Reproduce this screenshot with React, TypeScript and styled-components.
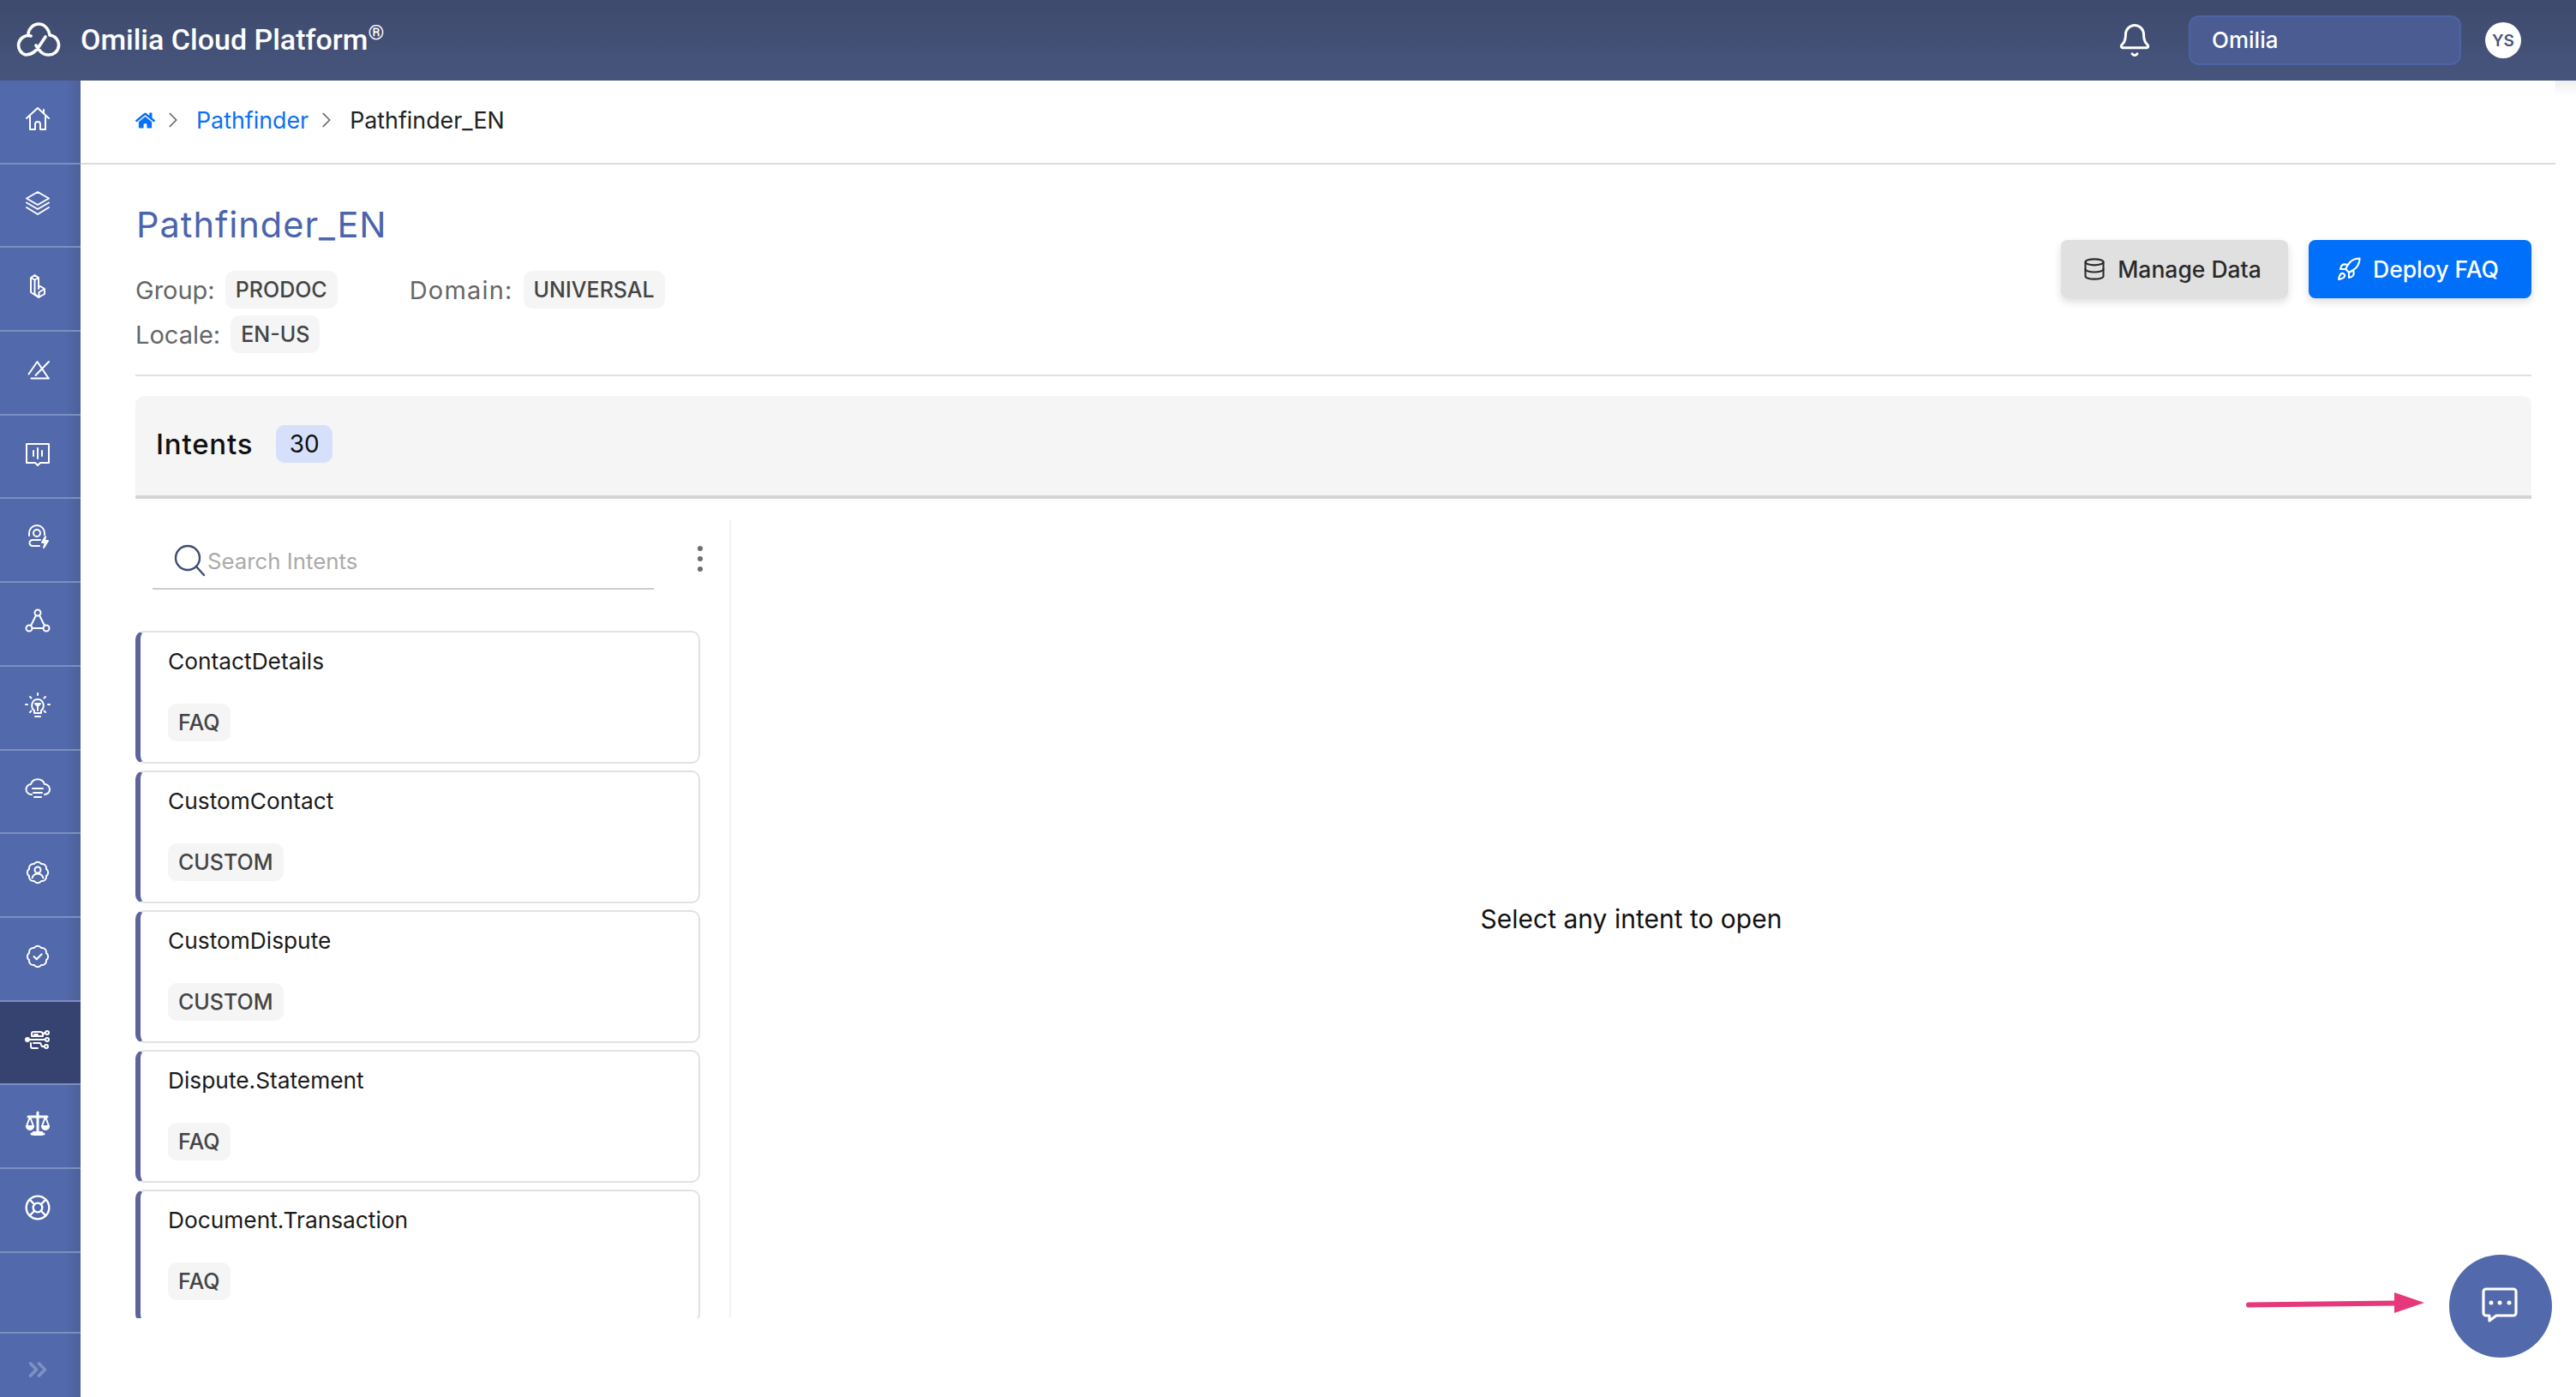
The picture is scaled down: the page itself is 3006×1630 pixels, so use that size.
import React from "react";
import styled, { createGlobalStyle } from "styled-components";
import { Bell, ChevronRight, ChevronsRight, Database, LifeBuoy, Rocket } from "lucide-react";
import { FaHome } from "react-icons/fa";

const GlobalStyle = createGlobalStyle`
  html, body {
    margin: 0;
    padding: 0;
    background: #fff;
  }
  body {
    width: 3006px;
    height: 1630px;
    overflow: hidden;
    font-family: Inter, "Liberation Sans", sans-serif;
  }
  * {
    box-sizing: border-box;
  }
`;

const Page = styled.div`
  position: relative;
  display: flex;
  flex-direction: column;
  width: 3006px;
  height: 1630px;
`;

const TopBar = styled.header`
  display: flex;
  align-items: center;
  flex: 0 0 94px;
  padding: 0 64px 0 18px;
  background: linear-gradient(to bottom, #3e4a6c, #47557e);
  color: #fff;
`;

const Brand = styled.div`
  display: flex;
  align-items: center;
  flex: 1;
  gap: 20px;
  margin-top: -2px;
`;

const BrandName = styled.span`
  font-family: Roboto, sans-serif;
  font-size: 34px;
  font-weight: 500;
  sup {
    font-size: 24px;
    font-weight: 400;
    line-height: 0;
    vertical-align: 12px;
  }
`;

const BellWrap = styled.div`
  display: flex;
  margin-right: 42px;
`;

const OrgSelect = styled.div`
  display: flex;
  align-items: center;
  width: 318px;
  height: 58px;
  padding: 0 0 2px 25px;
  margin-right: 28px;
  border: 2px solid #4e63a6;
  border-radius: 12px;
  background: #4b5c92;
  font-size: 26px;
  font-weight: 500;
`;

const Avatar = styled.div`
  display: flex;
  align-items: center;
  justify-content: center;
  width: 42px;
  height: 42px;
  border-radius: 50%;
  background: #fff;
  color: #47557e;
  font-size: 19px;
  font-weight: 600;
`;

const Body = styled.div`
  display: flex;
  flex: 1;
  min-height: 0;
`;

const Sidebar = styled.nav`
  display: flex;
  flex-direction: column;
  flex: 0 0 94px;
  background: linear-gradient(to right, #5269ab 0, #5269ab 82%, #4d6098 100%);
`;

const NavItem = styled.div<{ $active?: boolean; $size?: number }>`
  display: flex;
  align-items: center;
  justify-content: center;
  flex: 0 0 ${(p) => p.$size ?? 97.7}px;
  padding: 0 6px 6px 0;
  border-bottom: 2px solid #7c8fc2;
  background: ${(p) => (p.$active ? "#36426f" : "transparent")};
  color: #fff;
  svg {
    display: block;
  }
`;

const NavFooter = styled.div`
  display: flex;
  align-items: center;
  justify-content: center;
  flex: 1;
  padding: 11px 6px 0 0;
  color: #7d90c6;
`;

const Main = styled.main`
  display: flex;
  flex-direction: column;
  flex: 1;
  min-width: 0;
`;

const Gutter = styled.div`
  flex: 0 0 24px;
  background: linear-gradient(to bottom, #efefef, #fff 18px);
`;

const Breadcrumb = styled.div`
  display: flex;
  align-items: center;
  flex: 0 0 98px;
  gap: 12px;
  padding: 0 0 4px 64px;
  border-bottom: 2px solid #dcdcdc;
  font-size: 26.800px;
  color: #212121;
  svg {
    display: block;
  }
`;

const CrumbLink = styled.span`
  color: #0a70f5;
`;

const CrumbHome = styled.span`
  display: flex;
  color: #0a70f5;
`;

const CrumbArrow = styled.span`
  display: flex;
  margin: 0 0 0 -6px;
  color: #666;
`;

const Content = styled.div`
  display: flex;
  flex-direction: column;
  flex: 1;
  min-height: 0;
  padding: 0 28px 0 64px;
`;

const Header = styled.section`
  display: flex;
  align-items: center;
  justify-content: space-between;
  flex: 0 0 247px;
  border-bottom: 2px solid #e0e0e0;
`;

const HeaderInfo = styled.div`
  display: flex;
  flex-direction: column;
  align-self: flex-start;
  gap: 8px;
  padding-top: 47px;
`;

const Title = styled.h1`
  margin: 0 0 23px 1px;
  font-size: 41.500px;
  line-height: 46px;
  letter-spacing: 1px;
  font-weight: 400;
  color: #4a64ad;
`;

const MetaRow = styled.div`
  display: flex;
  align-items: center;
  gap: 84px;
`;

const Meta = styled.div`
  display: flex;
  align-items: center;
  gap: 12px;
`;

const MetaLabel = styled.span<{ $tracking?: number }>`
  font-size: 29px;
  letter-spacing: ${(p) => p.$tracking ?? 0}px;
  color: #666;
`;

const Chip = styled.span`
  display: inline-flex;
  align-items: center;
  height: 44px;
  padding: 0 12px;
  border-radius: 10px;
  background: #f5f5f5;
  color: #444;
  font-size: 25px;
  font-weight: 500;
`;

const Actions = styled.div`
  display: flex;
  gap: 24px;
  margin-bottom: 1px;
`;

const ActionButton = styled.button<{ $primary?: boolean; $width: number }>`
  display: flex;
  align-items: center;
  justify-content: center;
  gap: 13px;
  width: ${(p) => p.$width}px;
  height: 68px;
  padding: 0 6px 0 0;
  border: 0;
  border-radius: 8px;
  background: ${(p) => (p.$primary ? "#0070fb" : "#e0e0e0")};
  box-shadow: 0 4px 10px rgba(0, 0, 0, 0.14);
  color: ${(p) => (p.$primary ? "#fff" : "#2a2a2a")};
  font-family: inherit;
  font-size: 26.500px;
  font-weight: 500;
`;

const IntentsBar = styled.div`
  display: flex;
  align-items: center;
  flex: 0 0 120px;
  gap: 27px;
  margin-top: 23px;
  padding: 0 24px 4px;
  border-bottom: 4px solid #d4d4d4;
  border-radius: 10px 10px 0 0;
  background: #f5f5f5;
`;

const IntentsTitle = styled.span`
  font-size: 33px;
  font-weight: 500;
  letter-spacing: 0.8px;
  color: #111;
`;

const CountBadge = styled.span`
  display: flex;
  align-items: center;
  justify-content: center;
  width: 66px;
  height: 44px;
  border-radius: 10px;
  background: #d6e0fb;
  font-size: 28px;
  color: #111;
`;

const Split = styled.div`
  display: flex;
  flex: 0 0 932px;
  margin-top: 24px;
  overflow: hidden;
`;

const ListColumn = styled.div`
  display: flex;
  flex-direction: column;
  flex: 0 0 695px;
  padding-right: 34px;
  border-right: 2px solid #f2f2f2;
`;

const SearchRow = styled.div`
  display: flex;
  align-items: flex-end;
  justify-content: space-between;
  flex: 0 0 82px;
  padding-left: 20px;
`;

const SearchField = styled.div`
  display: flex;
  align-items: center;
  gap: 2px;
  width: 585px;
  height: 82px;
  padding: 30px 0 14px 24px;
  border-bottom: 2px solid #ccc;
  font-size: 25.800px;
  color: #aaa;
`;

const Kebab = styled.div`
  display: flex;
  flex-direction: column;
  gap: 6px;
  margin: 0 -3px 21px 0;
  i {
    display: block;
    width: 6px;
    height: 6px;
    border-radius: 50%;
    background: #6d6d6d;
  }
`;

const CardList = styled.div`
  display: flex;
  flex-direction: column;
  flex: none;
  gap: 8px;
  margin-top: 48px;
`;

const Card = styled.article`
  display: flex;
  flex-direction: column;
  align-items: flex-start;
  flex: 0 0 155px;
  padding: 18px 0 0 32px;
  border: 2px solid #e2e2e2;
  border-left: 6px solid #5f639c;
  border-radius: 10px;
`;

const CardTitle = styled.span`
  margin-bottom: 33px;
  font-size: 26.300px;
  line-height: 32px;
  color: #1a1a1a;
`;

const EmptyPane = styled.div`
  display: flex;
  align-items: center;
  justify-content: center;
  flex: 1;
  font-size: 30px;
  color: #111;
`;

const ChatButton = styled.button`
  position: absolute;
  right: 28px;
  bottom: 46px;
  display: flex;
  align-items: center;
  justify-content: center;
  width: 120px;
  height: 120px;
  padding: 0;
  border: 0;
  border-radius: 50%;
  background: #5269ab;
`;

const PointerArrow = styled.svg`
  position: absolute;
  left: 2618px;
  top: 1504px;
`;

const intents = [
  { name: "ContactDetails", kind: "FAQ" },
  { name: "CustomContact", kind: "CUSTOM" },
  { name: "CustomDispute", kind: "CUSTOM" },
  { name: "Dispute.Statement", kind: "FAQ" },
  { name: "Document.Transaction", kind: "FAQ" },
];

const stroke = {
  fill: "none",
  stroke: "currentColor",
  strokeWidth: 2,
  strokeLinecap: "round" as const,
  strokeLinejoin: "round" as const,
};

const Glyph = ({ children }: { children: React.ReactNode }) => (
  <svg width="30" height="30" viewBox="0 0 30 30" {...stroke}>
    {children}
  </svg>
);

// eight-lobed gear outline used by the two settings entries
const gearPath = () => {
  const points = Array.from({ length: 8 }, (_, i) => {
    const a = (Math.PI / 4) * i + Math.PI / 8;
    return [15 + 10.8 * Math.cos(a), 15 + 10.8 * Math.sin(a)];
  });
  const arcs = points.map(([x, y]) => `A5 5 0 0 1 ${x.toFixed(2)} ${y.toFixed(2)}`);
  return `M${points[7][0].toFixed(2)} ${points[7][1].toFixed(2)}${arcs.join("")}Z`;
};

const navIcons = [
  <Glyph key="home">
    <path d="M2 14 15 2l13 12M22 4v4M6 12v15h6v-6a3 3 0 0 1 6 0v6h6V12" />
  </Glyph>,
  <Glyph key="layers">
    <path d="M15 2 28 9.5 15 17 2 9.5zM2 14.5 15 22l13-7.5M2 20l13 8 13-8" />
  </Glyph>,
  <Glyph key="block">
    <path d="M7 5 11.500 2 16 5v13M7 5l4.500 2.500L16 5M11.500 7.500V24M7 5v17l9 6 7-4v-6l-5-3-2 1M11.500 24l5 4v-6l6.500-4" />
  </Glyph>,
  <Glyph key="mute">
    <path d="M4.500 19.500 14.500 5 27 23.500M28 5 12.500 21M7.500 24.500H28" />
  </Glyph>,
  <Glyph key="insight">
    <path d="M2 3h26v22H18l-3 3-3-3H2zM10 11v6M15 8v12M20 11v6" />
  </Glyph>,
  <Glyph key="agent">
    <circle cx="14" cy="10" r="4" />
    <path d="M5 13V10a9 9 0 0 1 18 0v2M18 18H9a3.500 3.500 0 0 0 0 7h8M24 14l-4 7h4l-2 6 5-8h-4z" />
  </Glyph>,
  <Glyph key="network">
    <circle cx="15" cy="5" r="3.500" />
    <circle cx="5" cy="23" r="3.500" />
    <circle cx="25" cy="23" r="3.500" />
    <path d="M13 8 7 20M17 8l6 12M8.500 23h13" />
  </Glyph>,
  <Glyph key="bulb">
    <path d="M15 1v2M3 14H1M29 14h-2M6 5l1.500 1.500M24 5l-1.500 1.500M6 23l1.500-1.500M24 23l-1.500-1.500M11 24v-3c-5-4-3-13 4-13s9 9 4 13v3zM12 28h6M12 13h6l-3 3zM15 16v5" />
  </Glyph>,
  <Glyph key="cloud">
    <path d="M8 22a6 6 0 0 1-1-12 8.500 8.500 0 0 1 16 0 6 6 0 0 1 0 12M9 15h12M10 20h10M11 25h8" />
  </Glyph>,
  <Glyph key="person">
    <path d={gearPath()} />
    <circle cx="15" cy="12" r="3.500" />
    <path d="M8.500 21.500c1-3.500 3.500-5 6.500-5s5.500 1.500 6.500 5" />
  </Glyph>,
  <Glyph key="check">
    <path d={gearPath()} />
    <path d="M10.500 15l3.200 3.200 6-6" />
  </Glyph>,
  <Glyph key="circuit">
    <circle cx="3" cy="15" r="2" fill="currentColor" />
    <circle cx="26" cy="15" r="2" />
    <circle cx="26" cy="7" r="2" />
    <circle cx="25" cy="23" r="2" />
    <path d="M5 15h19M8 11V8a2 2 0 0 1 2-2h8a3 3 0 0 1 3 3v2H8zM11 9h4M21 11c0-3 1-4 3-4M7 19v4a2 2 0 0 0 2 2h6M10 19h8l2 4h3" />
  </Glyph>,
  <Glyph key="scale">
    <path d="M15 2v24M4 7h22M8 27h14" strokeWidth={3} />
    <path d="M6 7l-4 11h8zM24 7l-4 11h8z" />
    <path d="M2 18a4 4 0 0 0 8 0zM20 18a4 4 0 0 0 8 0zM10 25h10v3H10z" fill="currentColor" />
  </Glyph>,
  <LifeBuoy key="buoy" size={32} strokeWidth={1.800} />,
];

const LogoMark = () => (
  <svg width="56" height="40" viewBox="0 0 56 40" fill="none" stroke="currentColor" strokeWidth="3.600" strokeLinecap="round">
    <path d="M18 16a10 10 0 1 0-6 22c8 0 13-5 17-12l6-9M40 15c-1-7-6-13-13-13-6 0-11 5-12 11M38 38c-7 0-10-5-14-11M40 15a11.500 11.500 0 0 1-2 23" />
  </svg>
);

const SearchIcon = () => (
  <svg width="38" height="38" viewBox="0 0 38 38" fill="none" stroke="#3f4d72" strokeWidth="2.400" strokeLinecap="round">
    <circle cx="17" cy="16" r="14" />
    <path d="M27 26l9 10" />
  </svg>
);

const ChatIcon = () => (
  <svg width="44" height="44" viewBox="0 0 44 44" fill="none">
    <path d="M5 2h32a3 3 0 0 1 3 3v25a3 3 0 0 1-3 3H17l-8 6v-6H5a3 3 0 0 1-3-3V5a3 3 0 0 1 3-3z" stroke="#fff" strokeWidth="3.200" strokeLinejoin="round" />
    <circle cx="11" cy="18" r="2.500" fill="#fff" />
    <circle cx="21" cy="18" r="2.500" fill="#fff" />
    <circle cx="32" cy="18" r="2.500" fill="#fff" />
  </svg>
);

const App = () => {
  return (
    <Page>
      <GlobalStyle />
      <TopBar>
        <Brand>
          <LogoMark />
          <BrandName>
            Omilia Cloud Platform<sup>®</sup>
          </BrandName>
        </Brand>
        <BellWrap>
          <Bell size={42} strokeWidth={1.700} />
        </BellWrap>
        <OrgSelect>Omilia</OrgSelect>
        <Avatar>YS</Avatar>
      </TopBar>
      <Body>
        <Sidebar>
          {navIcons.map((icon, i) => (
            <NavItem key={i} $active={i === 11}>
              {icon}
            </NavItem>
          ))}
          <NavItem $size={94} />
          <NavFooter>
            <ChevronsRight size={34} strokeWidth={2.600} />
          </NavFooter>
        </Sidebar>
        <Main>
          <Breadcrumb>
            <CrumbHome>
              <FaHome size={23} />
            </CrumbHome>
            <CrumbArrow>
              <ChevronRight size={30} strokeWidth={1.400} />
            </CrumbArrow>
            <CrumbLink>Pathfinder</CrumbLink>
            <CrumbArrow>
              <ChevronRight size={30} strokeWidth={1.400} />
            </CrumbArrow>
            <span>Pathfinder_EN</span>
          </Breadcrumb>
          <Content>
            <Header>
              <HeaderInfo>
                <Title>Pathfinder_EN</Title>
                <MetaRow>
                  <Meta>
                    <MetaLabel>Group:</MetaLabel>
                    <Chip>PRODOC</Chip>
                  </Meta>
                  <Meta>
                    <MetaLabel $tracking={1.200}>Domain:</MetaLabel>
                    <Chip>UNIVERSAL</Chip>
                  </Meta>
                </MetaRow>
                <MetaRow>
                  <Meta>
                    <MetaLabel>Locale:</MetaLabel>
                    <Chip>EN-US</Chip>
                  </Meta>
                </MetaRow>
              </HeaderInfo>
              <Actions>
                <ActionButton $width={265}>
                  <Database size={28} strokeWidth={1.800} />
                  Manage Data
                </ActionButton>
                <ActionButton $primary $width={260}>
                  <Rocket size={30} strokeWidth={1.700} />
                  Deploy FAQ
                </ActionButton>
              </Actions>
            </Header>
            <IntentsBar>
              <IntentsTitle>Intents</IntentsTitle>
              <CountBadge>30</CountBadge>
            </IntentsBar>
            <Split>
              <ListColumn>
                <SearchRow>
                  <SearchField>
                    <SearchIcon />
                    Search Intents
                  </SearchField>
                  <Kebab>
                    <i />
                    <i />
                    <i />
                  </Kebab>
                </SearchRow>
                <CardList>
                  {intents.map((intent) => (
                    <Card key={intent.name}>
                      <CardTitle>{intent.name}</CardTitle>
                      <Chip>{intent.kind}</Chip>
                    </Card>
                  ))}
                </CardList>
              </ListColumn>
              <EmptyPane>Select any intent to open</EmptyPane>
            </Split>
          </Content>
        </Main>
        <Gutter />
      </Body>
      <PointerArrow width="214" height="32" viewBox="0 0 214 32">
        <path d="M6 18.500 180 16.500" stroke="#e5397b" strokeWidth="6" strokeLinecap="round" />
        <path d="M176 4v24l35-12z" fill="#e5397b" />
      </PointerArrow>
      <ChatButton>
        <ChatIcon />
      </ChatButton>
    </Page>
  );
};

export default App;
